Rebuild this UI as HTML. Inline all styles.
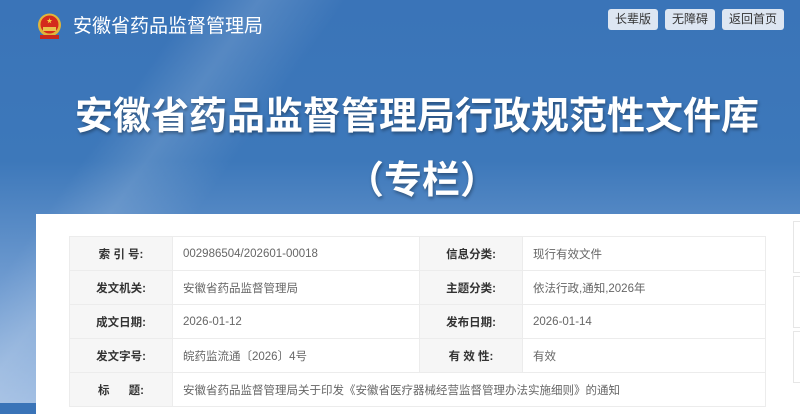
<!DOCTYPE html>
<html><head><meta charset="utf-8"><style>
*{margin:0;padding:0;box-sizing:border-box}
body{width:800px;height:403px;overflow:hidden;position:relative;font-family:"Liberation Sans","Noto Sans CJK SC",sans-serif;
background:linear-gradient(180deg,#3a74b8 0%,#3d78ba 40%,#6f9bd0 70%,#9ebce2 100%)}
.hl{position:absolute;left:0;top:0;width:800px;height:403px;background:linear-gradient(125deg,transparent 18%,rgba(255,255,255,.14) 24%,transparent 32%)}
.logo{position:absolute;left:37px;top:13px;width:25px;height:27px}
.site{position:absolute;left:73px;top:13px;font-size:19px;color:#fff;line-height:28px}
.btns{position:absolute;top:9px;left:608px;display:flex;gap:7px}
.btns div{background:#dde6f2;border-radius:3px;height:21px;line-height:21px;font-size:12px;color:#333;padding:0 7px}
.t1{position:absolute;left:75px;top:93px;font-size:38px;font-weight:bold;color:#fff;line-height:48px;text-shadow:1px 2px 3px rgba(0,0,0,.35)}
.t2{position:absolute;left:346px;top:157px;font-size:38px;font-weight:bold;color:#fff;line-height:48px;text-shadow:1px 2px 3px rgba(0,0,0,.35)}
.panel{position:absolute;left:36px;top:214px;width:764px;height:200px;background:#fff}
.side{position:absolute;left:793px;width:10px;border:1px solid #e6e6e6;background:#fff}
table{position:absolute;left:69px;top:236px;width:697px;border-collapse:collapse;font-size:11.5px}
td{border:1px solid #ececec;height:34px;color:#666;padding-left:10px}
td.l{background:#f6f6f6;font-weight:bold;color:#333;text-align:center;width:103px;padding:0}
</style></head><body>
<div class="hl"></div>
<svg class="logo" viewBox="0 0 25 27"><circle cx="12.5" cy="12" r="11.5" fill="#e0b53a"/><circle cx="12.5" cy="11.5" r="9" fill="#d42a1c"/><rect x="6" y="14" width="13" height="4" fill="#e8c24a"/><rect x="3" y="22" width="19" height="4" fill="#c9271b"/><text x="12.5" y="10" font-size="6" fill="#f5d042" text-anchor="middle">★</text></svg>
<div class="site">安徽省药品监督管理局</div>
<div class="btns"><div>长辈版</div><div>无障碍</div><div>返回首页</div></div>
<div class="t1">安徽省药品监督管理局行政规范性文件库</div>
<div class="t2">（专栏）</div>
<div class="panel"></div>
<div class="side" style="top:221px;height:52px"></div>
<div class="side" style="top:276px;height:52px"></div>
<div class="side" style="top:331px;height:52px"></div>
<table>
<tr><td class="l">索 引 号:</td><td style="width:247px">002986504/202601-00018</td><td class="l" style="width:102px">信息分类:</td><td>现行有效文件</td></tr>
<tr><td class="l">发文机关:</td><td>安徽省药品监督管理局</td><td class="l">主题分类:</td><td>依法行政,通知,2026年</td></tr>
<tr><td class="l">成文日期:</td><td>2026-01-12</td><td class="l">发布日期:</td><td>2026-01-14</td></tr>
<tr><td class="l">发文字号:</td><td>皖药监流通〔2026〕4号</td><td class="l">有 效 性:</td><td>有效</td></tr>
<tr><td class="l">标&nbsp;&nbsp;&nbsp;&nbsp;&nbsp;&nbsp;题:</td><td colspan="3">安徽省药品监督管理局关于印发《安徽省医疗器械经营监督管理办法实施细则》的通知</td></tr>
</table>
</body></html>
